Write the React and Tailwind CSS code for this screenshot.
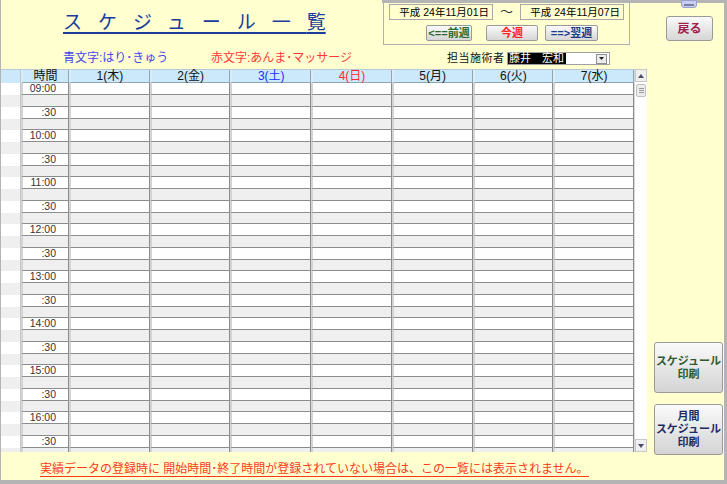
import React from 'react';

const days = [
    { l: '1(木)', c: 'text-[#111]' },
    { l: '2(金)', c: 'text-[#111]' },
    { l: '3(土)', c: 'text-[#2a2aff]' },
    { l: '4(日)', c: 'text-[#ff2a2a]' },
    { l: '5(月)', c: 'text-[#111]' },
    { l: '6(火)', c: 'text-[#111]' },
    { l: '7(水)', c: 'text-[#111]' },
];

const rows = [];
for (let h = 9; h <= 16; h++) {
    rows.push(String(h).padStart(2, '0') + ':00', '', ':30', '');
}

const App = () => {
    return (
        <div className="relative w-[727px] h-[484px] bg-[#ffffcf] border-l border-r-[3px] border-b-[4px] border-[#b4b4b4] flex flex-col font-['Liberation_Sans','Noto_Sans_CJK_JP',sans-serif] overflow-hidden">
            {/* window frame on top */}
            <div className="flex h-[3px] shrink-0">
                <div className="w-[381px]" />
                <div className="flex-1 bg-[#b4b4b4]" />
            </div>
            <div className="absolute left-[680px] top-0 w-[16px] h-[8px] rounded-b-[3px] bg-[#c8ccf4] border border-[#9aa0cc] flex flex-col justify-end items-center pb-[1px]">
                <div className="w-[10px] h-[2px] bg-[#7a80a0]" />
            </div>

            <div className="flex flex-1">
                {/* left part */}
                <div className="w-[646px] flex flex-col">
                    <div className="h-[66px] flex">
                        <div className="w-[382px] pl-[62px] pt-[8px]">
                            <div className="text-[19px] leading-[24px] text-[#1a3c9c]">
                                <span className="underline underline-offset-[3px] decoration-[1.5px]">
                                    <span className="tracking-[16px]">スケジュール一</span>覧
                                </span>
                            </div>
                            <div className="mt-[15px] flex text-[12px] leading-[16px]">
                                <span className="w-[148px] text-[#4646ee]">青文字:はり･きゅう</span>
                                <span className="text-[#ff3838]">赤文字:あんま･マッサージ</span>
                            </div>
                        </div>
                        <div className="flex-1 flex flex-col">
                            <div className="w-[247px] h-[42px] border-x border-b border-[#b0b0b0] flex flex-col">
                                <div className="flex items-center mt-[1px] ml-[5px] h-[16px]">
                                    <div className="w-[104px] h-[16px] border border-[#a8a8a8] text-[10.5px] leading-[14px] text-right pr-[3px] text-black">平成 24年11月01日</div>
                                    <div className="w-[27px] text-center text-[13px] leading-[14px] text-[#333]">～</div>
                                    <div className="w-[104px] h-[16px] border border-[#a8a8a8] text-[10.5px] leading-[14px] text-right pr-[3px] text-black">平成 24年11月07日</div>
                                </div>
                                <div className="flex mt-[5px] h-[16px] text-[11px] font-bold leading-[14px]">
                                    <button className="ml-[42px] w-[46px] h-[16px] border border-[#9a9a9a] rounded-[2px] bg-gradient-to-b from-[#fafafa] to-[#d6d6d6] text-[#2a6a2a]">&lt;==前週</button>
                                    <button className="ml-[14px] w-[52px] h-[16px] border border-[#9a9a9a] rounded-[2px] bg-gradient-to-b from-[#fafafa] to-[#d6d6d6] text-[#ff2020]">今週</button>
                                    <button className="ml-[7px] w-[53px] h-[16px] border border-[#9a9a9a] rounded-[2px] bg-gradient-to-b from-[#fafafa] to-[#d6d6d6] text-[#1a3a8a]">==&gt;翌週</button>
                                </div>
                            </div>
                            <div className="flex items-center mt-[7px] pl-[64px] h-[13px]">
                                <span className="text-[11px] tracking-[0.5px] leading-[13px] text-[#111] w-[60px]">担当施術者</span>
                                <div className="w-[103px] h-[13px] bg-white border border-[#a0a0a0] flex items-center">
                                    <span className="bg-black text-white text-[11px] leading-[11px] px-[1px] w-[58px]">藤井　宏和</span>
                                    <div className="flex-1" />
                                    <div className="w-[11px] h-[10px] mr-[2px] bg-[#ececec] border border-[#909090] flex items-center justify-center">
                                        <svg width="5" height="3" viewBox="0 0 5 3"><path d="M0 0h5L2.5 3z" fill="#222" /></svg>
                                    </div>
                                </div>
                            </div>
                        </div>
                    </div>

                    {/* schedule grid */}
                    <div className="h-[383px] flex">
                        <div className="w-[633px] flex flex-col">
                            <div className="grid grid-cols-[20px_48px_repeat(7,1fr)] h-[14px] bg-[#cbe9fb] border-t border-[#b8c8d4]">
                                <div className="border-r border-[#b8c8d4]" />
                                <div className="border-l-2 border-l-[#dcecf6] border-r border-r-[#8fa4b4] border-b border-b-[#8fa4b4] text-center text-[12px] leading-[12px] text-[#111]">時間</div>
                                {days.map((d) => (
                                    <div key={d.l} className={`border-l-2 border-l-[#dcecf6] border-r border-r-[#8fa4b4] border-b border-b-[#8fa4b4] text-center text-[12px] leading-[12px] ${d.c}`}>{d.l}</div>
                                ))}
                            </div>
                            <div className="flex-1 overflow-hidden">
                                {rows.map((r, i) => {
                                    const h = i % 4 === 3 ? 'h-[11px]' : 'h-[12px]';
                                    const bg = i % 2 === 0 ? 'bg-white' : 'bg-[#efefef]';
                                    return (
                                        <div key={i} className={`grid grid-cols-[20px_48px_repeat(7,1fr)] ${h}`}>
                                            <div className={`${bg} border-r border-[#c8c8c8]`} />
                                            <div className={`${bg} border-l-2 border-l-[#d4d4d4] border-r border-r-[#8c8c8c] border-b border-b-[#8c8c8c] text-right pr-[12px] text-[10.5px] leading-[11px] text-[#333]`}>{r}</div>
                                            {days.map((d) => (
                                                <div key={d.l} className={`${bg} border-l-2 border-l-[#d4d4d4] border-r border-r-[#8c8c8c] border-b border-b-[#8c8c8c]`} />
                                            ))}
                                        </div>
                                    );
                                })}
                            </div>
                        </div>
                        {/* scrollbar */}
                        <div className="w-[13px] flex flex-col bg-white border-l border-[#d8d8d8]">
                            <div className="h-[13px] bg-[#f0f0f0] border border-[#c8c8c8] flex items-center justify-center">
                                <svg width="6" height="4" viewBox="0 0 6 4"><path d="M3 0L6 4H0z" fill="#4a4a6a" /></svg>
                            </div>
                            <div className="h-[13px] mt-[2px] mx-[1px] bg-[#ececec] border border-[#c0c0c0] rounded-[2px] flex flex-col items-center justify-center gap-[1px]">
                                <div className="w-[5px] h-px bg-[#999]" />
                                <div className="w-[5px] h-px bg-[#999]" />
                                <div className="w-[5px] h-px bg-[#999]" />
                            </div>
                            <div className="flex-1" />
                            <div className="h-[13px] bg-[#f0f0f0] border border-[#c8c8c8] flex items-center justify-center">
                                <svg width="6" height="4" viewBox="0 0 6 4"><path d="M0 0H6L3 4z" fill="#4a4a6a" /></svg>
                            </div>
                        </div>
                    </div>

                    <div className="flex-1 pl-[39px] pt-[10px]">
                        <div className="w-fit text-[12px] leading-[14px] text-[#ff3a1a] border-b border-[#ff3a1a]">実績データの登録時に&nbsp;開始時間･終了時間が登録されていない場合は、この一覧には表示されません。</div>
                    </div>
                </div>

                {/* right side buttons */}
                <div className="flex-1 flex flex-col">
                    <button className="mt-[13px] ml-[19px] w-[47px] h-[25px] border border-[#9a9a9a] rounded-[3px] bg-gradient-to-b from-[#fafafa] to-[#d6d6d6] text-[12px] font-bold text-[#a0204a]">戻る</button>
                    <div className="flex-1" />
                    <button className="ml-[7px] w-[69px] h-[51px] border border-[#9a9a9a] rounded-[3px] bg-gradient-to-b from-[#fafafa] to-[#d4d4d4] text-[11px] leading-[13px] font-bold text-[#2c5a2c] flex flex-col items-center justify-center">
                        <span>スケジュール</span>
                        <span>印刷</span>
                    </button>
                    <button className="mt-[11px] mb-[25px] ml-[7px] w-[69px] h-[51px] border border-[#9a9a9a] rounded-[3px] bg-gradient-to-b from-[#fafafa] to-[#d4d4d4] text-[11px] leading-[13px] font-bold text-[#1c2c60] flex flex-col items-center justify-center">
                        <span>月間</span>
                        <span>スケジュール</span>
                        <span>印刷</span>
                    </button>
                </div>
            </div>
        </div>
    );
};

export default App;
